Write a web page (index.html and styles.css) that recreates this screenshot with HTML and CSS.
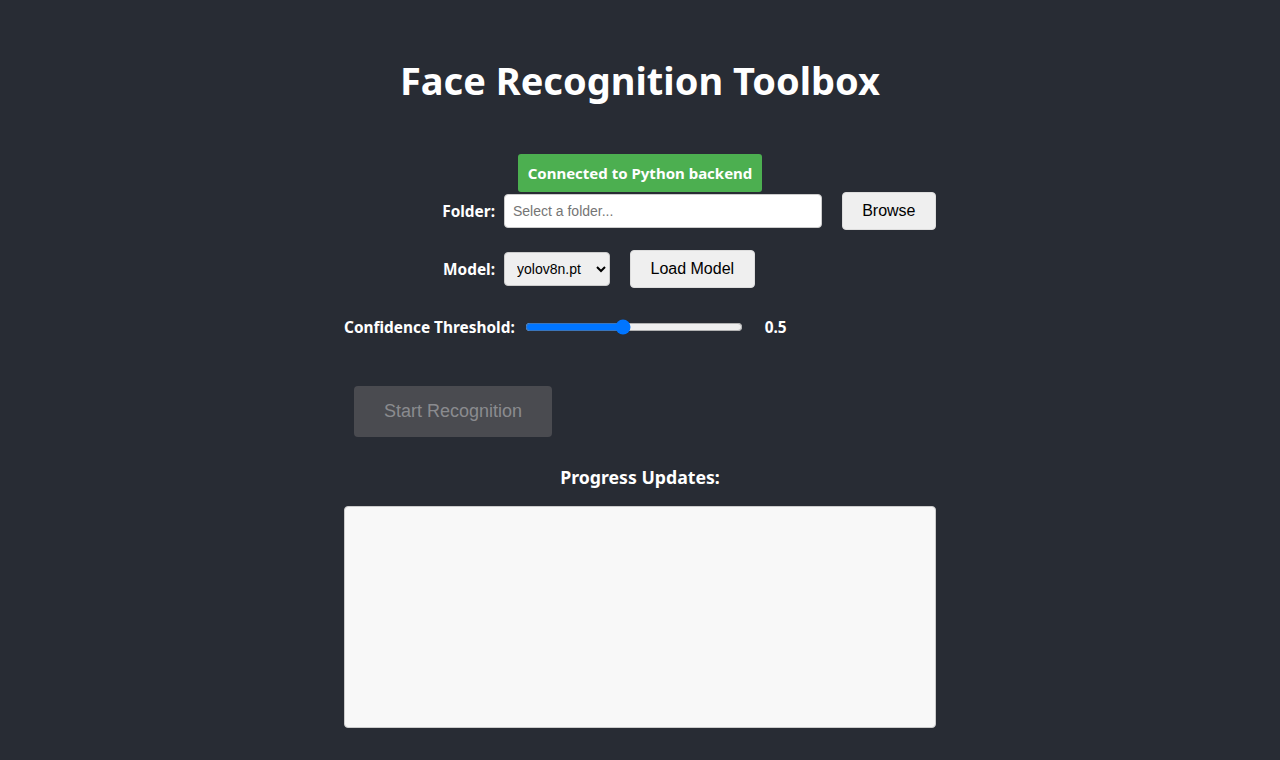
FILE: index.html
```html
<!DOCTYPE html>
<html>
<head>
<meta charset="utf-8">
<link rel="stylesheet" href="styles.css">
</head>
<body>
<div class="app">
  <h1 class="title">Face Recognition Toolbox</h1>
  <div class="panel">
    <div class="status">Connected to Python backend</div>
    <div class="row">
      <label class="lbl">Folder:</label>
      <input class="text-input" type="text" placeholder="Select a folder...">
      <button class="btn">Browse</button>
    </div>
    <div class="row">
      <label class="lbl">Model:</label>
      <select class="sel"><option>yolov8n.pt</option></select>
      <button class="btn">Load Model</button>
    </div>
    <div class="row">
      <label class="lbl">Confidence Threshold:</label>
      <input class="range" type="range" min="0.1" max="1" step="0.05" value="0.5">
      <span class="val">0.5</span>
    </div>
    <div class="start-row">
      <button class="start" disabled>Start Recognition</button>
    </div>
    <h3 class="progress-title">Progress Updates:</h3>
    <textarea class="log" readonly></textarea>
  </div>
</div>
</body>
</html>
```
FILE: styles.css
```css
html, body {
  margin: 0;
  padding: 0;
  background: #282c34;
  height: 100%;
}
body {
  font-family: "Noto Sans", "Open Sans", sans-serif;
  color: #ffffff;
}
.app {
  display: flex;
  flex-direction: column;
  align-items: center;
}
.title {
  margin: 54px 0 0 0;
  font-size: 38px;
  line-height: 52px;
  font-weight: 700;
}
.panel {
  width: 592px;
  margin-top: 48px;
  display: flex;
  flex-direction: column;
}
.status {
  align-self: center;
  background: #4caf50;
  color: #fff;
  font-weight: 700;
  font-size: 15px;
  height: 38px;
  line-height: 38px;
  padding: 0 10px;
  border-radius: 3px;
}
.row {
  display: flex;
  align-items: center;
  height: 38px;
  margin-bottom: 20px;
}
.lbl {
  min-width: 151px;
  text-align: right;
  font-weight: 700;
  font-size: 15.4px;
  margin-right: 9px;
}
.text-input {
  box-sizing: border-box;
  width: 318px;
  height: 34px;
  padding: 0 8px;
  border: 1px solid #cccccc;
  border-radius: 4px;
  background: #ffffff;
  font-family: "Liberation Sans", Arial, sans-serif;
  font-size: 14px;
  margin: 0 20px 0 0;
}
.text-input::placeholder {
  color: #757575;
}
.btn {
  box-sizing: border-box;
  height: 38px;
  padding: 0 19.5px;
  background: #efefef;
  border: 1px solid #dddddd;
  border-radius: 4px;
  font-family: "Liberation Sans", Arial, sans-serif;
  font-size: 16px;
  color: #000;
}
.sel {
  box-sizing: border-box;
  width: 106px;
  height: 34px;
  padding: 0 4px 0 8px;
  background: #efefef;
  border: 1px solid #cccccc;
  border-radius: 4px;
  font-family: "Liberation Sans", Arial, sans-serif;
  font-size: 14px;
  color: #000;
  margin-right: 20px;
}
.range {
  width: 218px;
  margin: 0 22px 0 1px;
}
.val {
  font-weight: 700;
  font-size: 15.4px;
}
.start-row {
  display: flex;
  margin-top: 20px;
  padding-left: 10px;
}
.start {
  box-sizing: border-box;
  width: 198px;
  height: 51px;
  background: #4a4b50;
  color: #8a8b8f;
  border: none;
  border-radius: 4px;
  font-family: "Liberation Sans", Arial, sans-serif;
  font-size: 18px;
}
.progress-title {
  text-align: center;
  margin: 28px 0 0 0;
  font-size: 17.7px;
  line-height: 24px;
  font-weight: 700;
}
.log {
  box-sizing: border-box;
  width: 592px;
  height: 222px;
  margin-top: 17px;
  background: #f8f8f8;
  border: 1px solid #cccccc;
  border-radius: 4px;
  resize: none;
}
```
